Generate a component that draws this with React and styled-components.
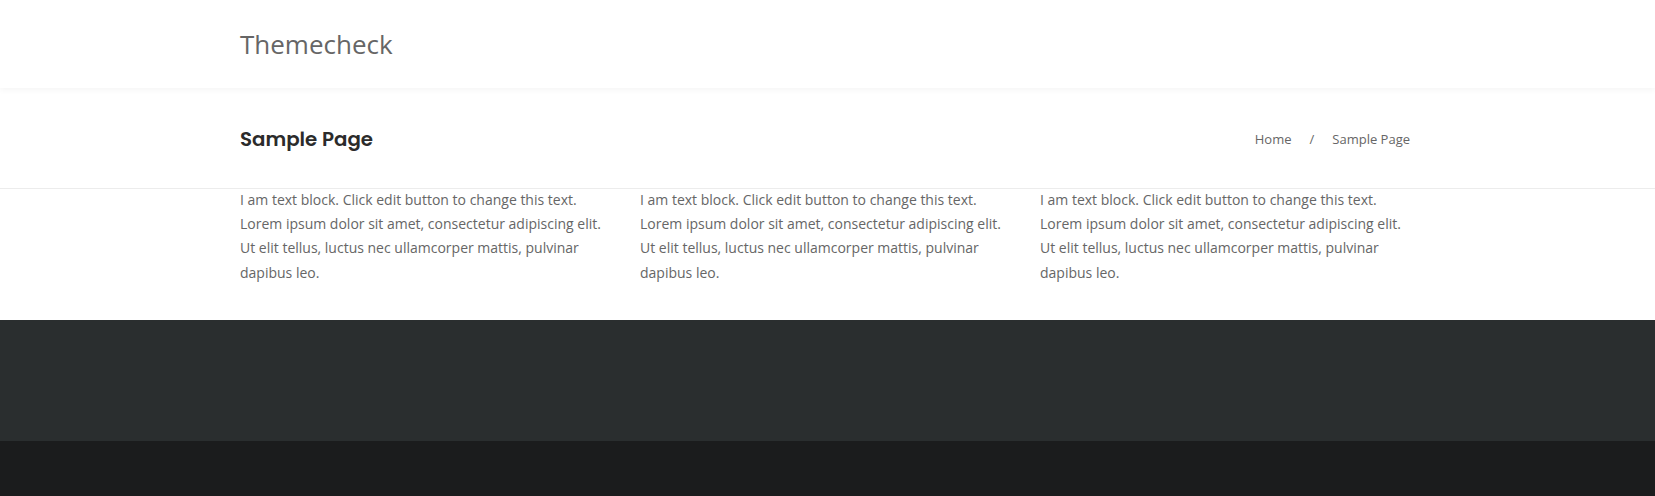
import React from "react";
import styled, { createGlobalStyle } from "styled-components";

const Global = createGlobalStyle`
  html { overflow-y: scroll; }
  html::-webkit-scrollbar { width: 2px; }
  html::-webkit-scrollbar-track { background: #46546a; }
  html::-webkit-scrollbar-thumb { background: #7d8896; }
  body {
    margin: 0;
    background: #ffffff;
    font-family: "Open Sans", "Liberation Sans", sans-serif;
    color: #666;
  }
`;

const Container = styled.div`
  width: 1175px;
  margin: 0 auto;
  box-sizing: border-box;
`;

const Header = styled.header`
  height: 88px;
  background: #fff;
  box-shadow: 0 2px 6px rgba(0, 0, 0, 0.045);
  position: relative;
  z-index: 1;
`;

const HeaderInner = styled(Container)`
  height: 100%;
  display: flex;
  align-items: center;
`;

const Logo = styled.a`
  font-family: "Open Sans", sans-serif;
  font-size: 26px;
  color: #666;
  text-decoration: none;
`;

const TitleBar = styled.section`
  height: 101px;
  border-bottom: 1px solid #ececec;
  box-sizing: border-box;
`;

const TitleInner = styled(Container)`
  height: 100%;
  display: flex;
  align-items: center;
  justify-content: space-between;
  padding-top: 1px;
`;

const PageTitle = styled.h1`
  margin: 0;
  font-family: "Poppins", Inter, "Noto Sans", sans-serif;
  font-weight: 600;
  font-size: 19.8px;
  color: #2b2b2b;
`;

const Crumbs = styled.nav`
  display: flex;
  align-items: center;
  gap: 18px;
  font-size: 13px;
  color: #666;
  margin-right: 5px;
`;

const Crumb = styled.span`
  color: #666;
`;

const Content = styled(Container)`
  display: grid;
  grid-template-columns: repeat(3, 366px);
  column-gap: 34px;
  padding-bottom: 35px;
`;

const TextBlock = styled.p`
  margin: -1px 0 0;
  font-size: 14px;
  line-height: 24.2px;
  color: #666;
`;

const FooterTop = styled.footer`
  height: 121px;
  background: #2a2e2f;
`;

const FooterBottom = styled.div`
  height: 487px;
  background: #1b1c1d;
`;

const text =
  "I am text block. Click edit button to change this text. Lorem ipsum dolor sit amet, consectetur adipiscing elit. Ut elit tellus, luctus nec ullamcorper mattis, pulvinar dapibus leo.";

export default function App() {
  return (
    <>
      <Global />
      <Header>
        <HeaderInner>
          <Logo href="#">Themecheck</Logo>
        </HeaderInner>
      </Header>
      <TitleBar>
        <TitleInner>
          <PageTitle>Sample Page</PageTitle>
          <Crumbs>
            <Crumb>Home</Crumb>
            <Crumb>/</Crumb>
            <Crumb>Sample Page</Crumb>
          </Crumbs>
        </TitleInner>
      </TitleBar>
      <Content>
        <TextBlock>{text}</TextBlock>
        <TextBlock>{text}</TextBlock>
        <TextBlock>{text}</TextBlock>
      </Content>
      <FooterTop />
      <FooterBottom />
    </>
  );
}
